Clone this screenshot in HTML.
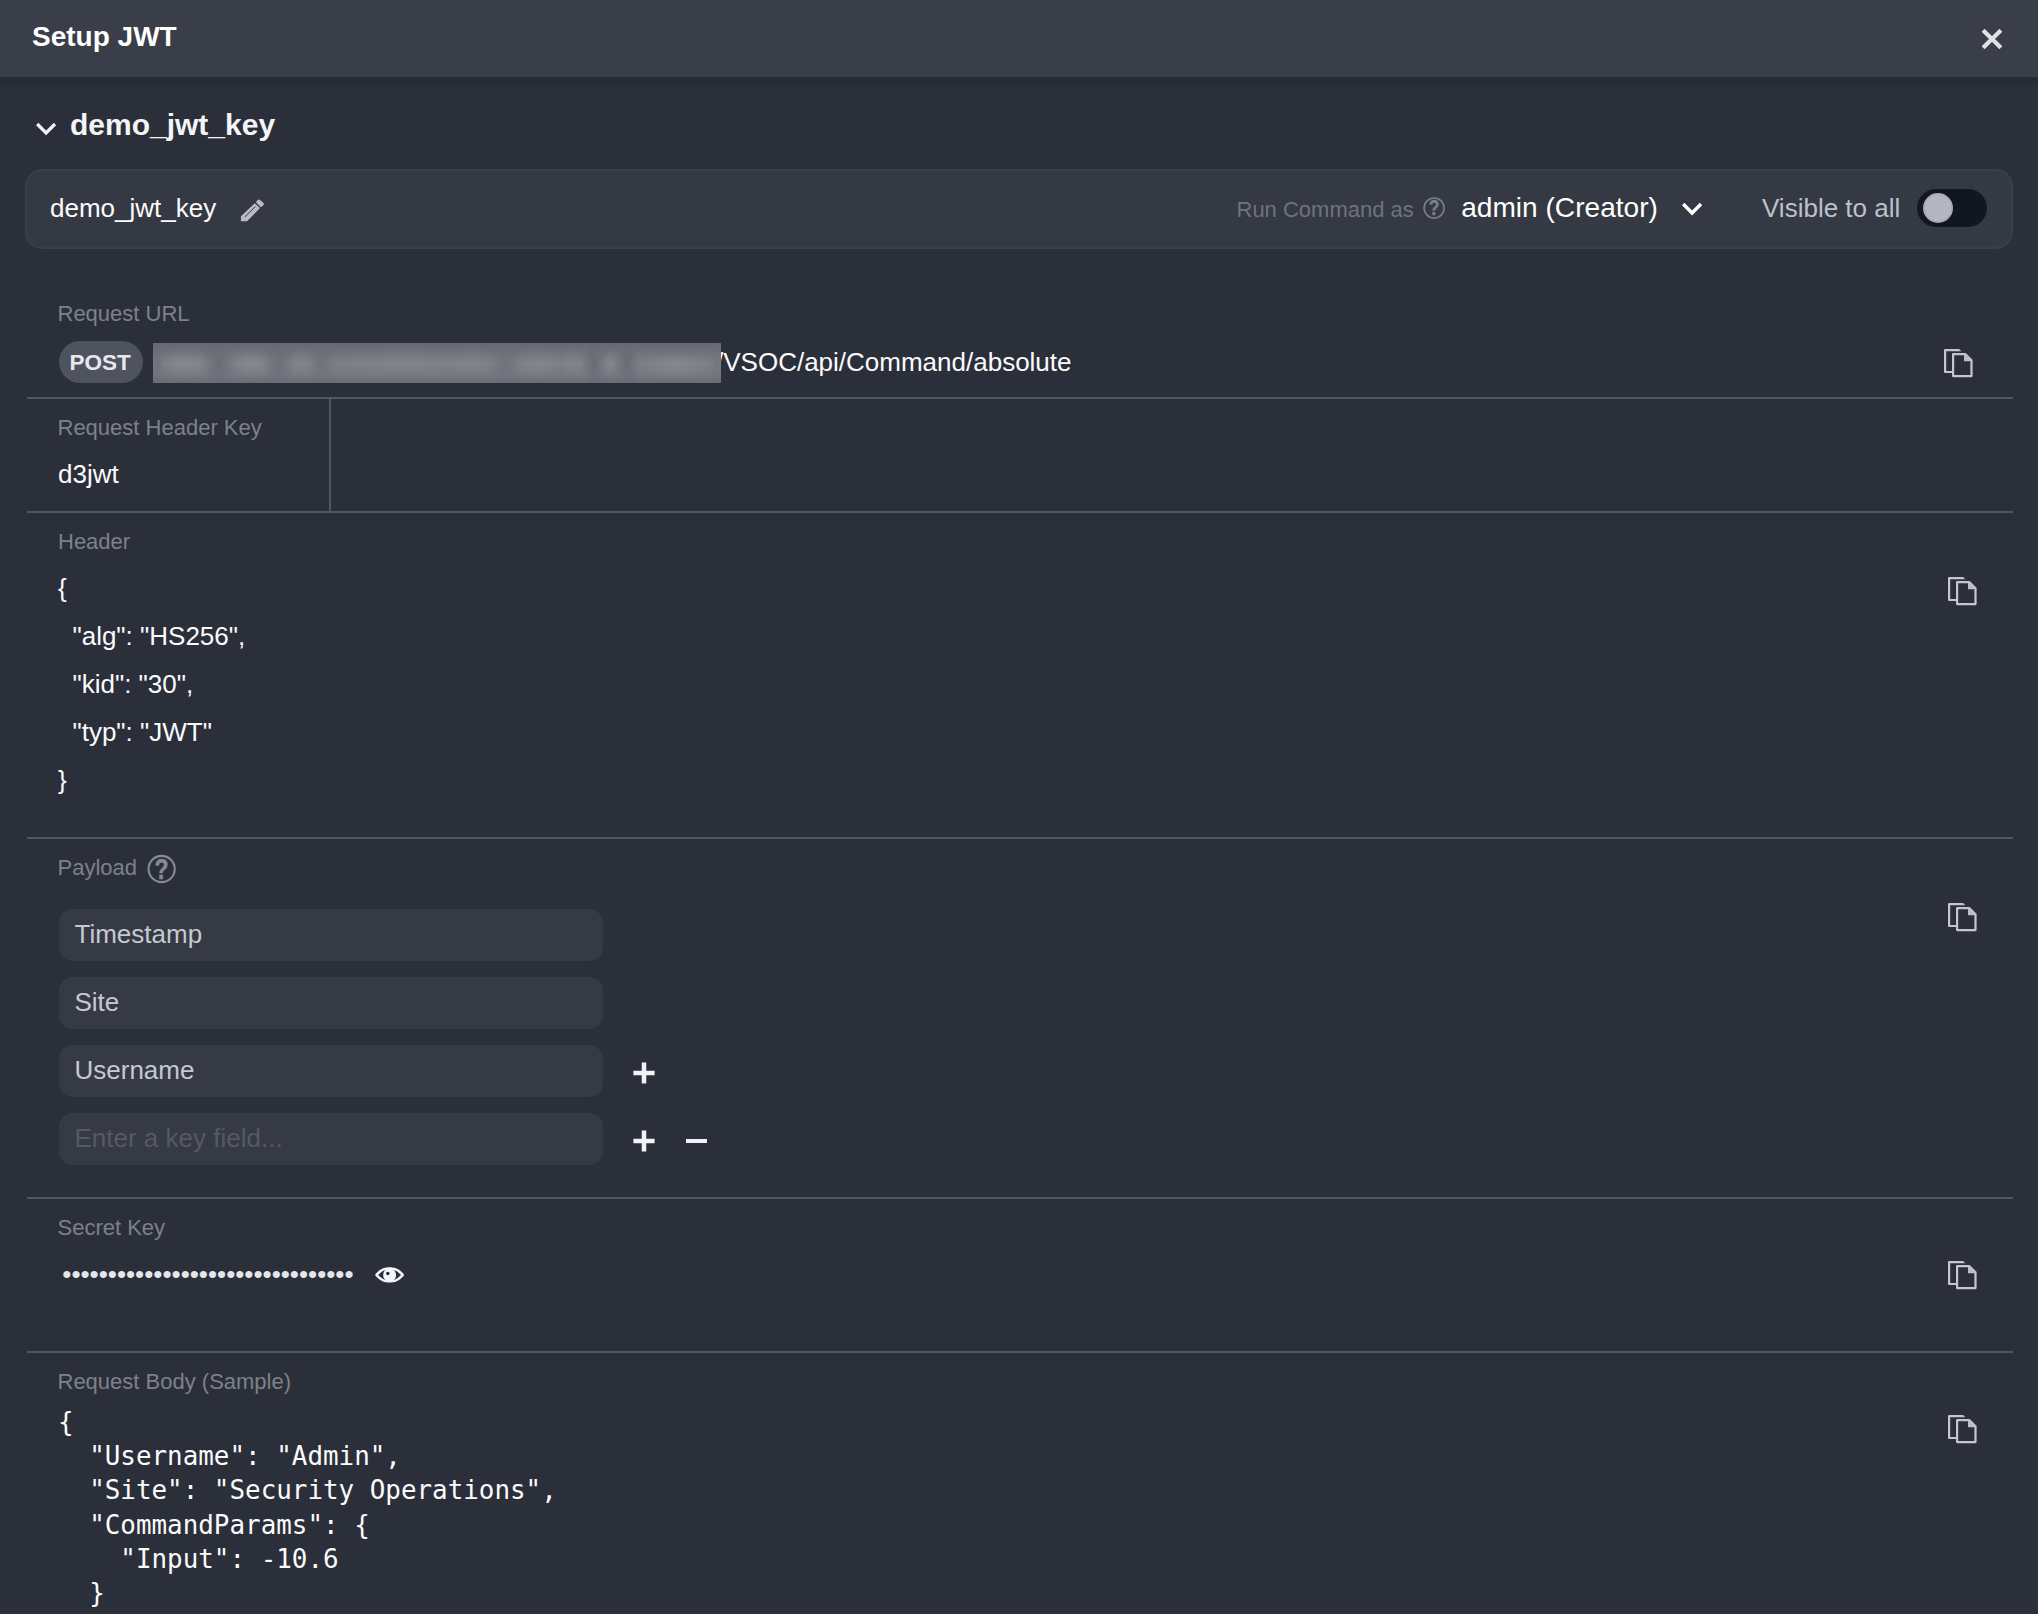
<!DOCTYPE html>
<html lang="en">
<head>
<meta charset="utf-8">
<title>Setup JWT</title>
<style>
*{box-sizing:border-box;margin:0;padding:0}
html,body{width:2038px;height:1614px;overflow:hidden;background:#2b2f3a}
body{position:relative;font-family:"Liberation Sans",Arial,sans-serif;color:#fff;-webkit-font-smoothing:antialiased}
.abs{position:absolute;white-space:pre}
.t{position:absolute;white-space:pre;line-height:1}
.lbl{font-size:22px;color:#7d818b}
.val{font-size:26px;color:#fbfbfc}
#hdr{position:absolute;left:0;top:0;width:2038px;height:85px;background:#272b34}
#hdr i{position:absolute;left:0;top:0;width:2038px;height:77px;background:#3a3e48;border-bottom:1px solid #3d414b}
#card{position:absolute;left:25px;top:169px;width:1988px;height:80px;border-radius:17px;background:#353943;border:2px solid #3a3e49}
.hr{position:absolute;left:27px;width:1986px;height:2px;background:#515662}
.inp{position:absolute;left:59px;width:544px;height:52px;border-radius:14px;background:#363a45}
.inp span{position:absolute;left:15.5px;top:12px;font-size:26px;line-height:1;color:#c6c9d0;white-space:pre}
.copy{position:absolute;width:30px;height:30px}
</style>
</head>
<body>

<!-- title bar -->
<div id="hdr"><i></i></div>
<div class="t" style="left:32px;top:23px;font-size:28px;font-weight:bold;color:#fff">Setup JWT</div>
<svg class="abs" style="left:1976px;top:23px" width="32" height="32" viewBox="0 0 32 32"><path d="M7.1 7.3 L24.9 24.7 M24.9 7.3 L7.1 24.7" stroke="#dfe1e6" stroke-width="4.2" fill="none"/></svg>

<!-- section heading -->
<svg class="abs" style="left:32px;top:118px" width="28" height="22" viewBox="0 0 28 22"><path d="M5.2 6 L14.1 15 L23 6" stroke="#f1f2f4" stroke-width="3.3" fill="none"/></svg>
<div class="t" style="left:70px;top:110px;font-size:30px;font-weight:bold;color:#f4f5f7">demo_jwt_key</div>

<!-- card -->
<div id="card"></div>
<div class="abs" style="left:1445px;top:183px;width:268px;height:51px;background:#2d313c"><div style="width:100%;height:100%;border-radius:4px;background:#353943"></div></div>
<div class="t val" style="left:50px;top:195px">demo_jwt_key</div>
<svg class="abs" style="left:238px;top:197px" width="28" height="26" viewBox="238 197 28 26"><path d="M240.9 221.2 L240.9 216.3 L254.75 203.25 L260.05 208.1 L247 221.2 Z" fill="#b9bcc4"/><path d="M255.95 202.3 L257.6 200.2 Q258.7 199.2 260 199.9 L263.5 203 Q264.4 204 263.5 205.1 L260.95 207.35 Z" fill="#b9bcc4"/><path d="M244.9 216.9 L255.4 206.5" stroke="#353943" stroke-width="1" fill="none"/></svg>
<svg class="abs" style="left:1422px;top:196px" width="24" height="24" viewBox="0 0 24 24"><circle cx="12.1" cy="12" r="10" fill="none" stroke="#7b7f8a" stroke-width="1.6"/><text transform="translate(12 19.4) scale(1 1.24)" x="0" y="0" text-anchor="middle" font-family="Liberation Sans, Arial, sans-serif" font-weight="bold" font-size="17.6" fill="#7b7f8a" stroke="#7b7f8a" stroke-width="0.3">?</text></svg>
<div class="t lbl" style="left:1236.5px;top:199px;color:#6f737d">Run Command as</div>
<div class="t" style="left:1461.2px;top:194px;font-size:28.1px;color:#fff">admin (Creator)</div>
<svg class="abs" style="left:1678px;top:198px" width="28" height="22" viewBox="0 0 28 22"><path d="M5.2 6 L14.1 15 L23 6" stroke="#fff" stroke-width="3.4" fill="none"/></svg>
<div class="t val" style="left:1762px;top:195px;color:#bdc1ca">Visible to all</div>
<div class="abs" style="left:1917px;top:189px;width:70px;height:38px;border-radius:19px;background:#121622"></div>
<div class="abs" style="left:1923px;top:193px;width:30px;height:30px;border-radius:15px;background:#b5b7c0;border:2px solid #a9abb4"></div>

<!-- Request URL -->
<div class="t lbl" style="left:57.5px;top:302.5px">Request URL</div>
<div class="abs" style="left:59px;top:341px;width:84px;height:42px;border-radius:21px;background:#4f5360"></div>
<div class="t" style="left:69.6px;top:352px;font-size:22.5px;font-weight:bold;color:#e6e8ec">POST</div>
<div class="t val" style="left:716px;top:348.5px">/VSOC/api/Command/absolute</div>
<div id="blur" class="abs" style="left:153px;top:343px;width:568px;height:40px;overflow:hidden;background:radial-gradient(ellipse 18px 24px at 66px 20px,rgba(98,101,110,0.7),rgba(98,101,110,0) 100%),radial-gradient(ellipse 16px 24px at 126px 20px,rgba(98,101,110,0.6),rgba(98,101,110,0) 100%),radial-gradient(ellipse 14px 24px at 169px 20px,rgba(98,101,110,0.5),rgba(98,101,110,0) 100%),radial-gradient(ellipse 16px 24px at 352px 20px,rgba(98,101,110,0.45),rgba(98,101,110,0) 100%),radial-gradient(ellipse 13px 24px at 441px 20px,rgba(98,101,110,0.75),rgba(98,101,110,0) 100%),radial-gradient(ellipse 13px 24px at 474px 20px,rgba(98,101,110,0.75),rgba(98,101,110,0) 100%),radial-gradient(ellipse 8px 24px at 4px 20px,rgba(98,101,110,0.5),rgba(98,101,110,0) 100%),radial-gradient(ellipse 8px 24px at 564px 20px,rgba(98,101,110,0.3),rgba(98,101,110,0) 100%),radial-gradient(ellipse 26px 15px at 33px 21px,rgba(142,144,151,0.5),rgba(142,144,151,0) 100%),radial-gradient(ellipse 22px 15px at 98px 21px,rgba(142,144,151,0.5),rgba(142,144,151,0) 100%),radial-gradient(ellipse 16px 15px at 147px 21px,rgba(142,144,151,0.3),rgba(142,144,151,0) 100%),radial-gradient(ellipse 60px 15px at 250px 21px,rgba(142,144,151,0.25),rgba(142,144,151,0) 100%),radial-gradient(ellipse 24px 15px at 318px 21px,rgba(142,144,151,0.3),rgba(142,144,151,0) 100%),radial-gradient(ellipse 24px 15px at 385px 21px,rgba(142,144,151,0.35),rgba(142,144,151,0) 100%),radial-gradient(ellipse 14px 15px at 421px 21px,rgba(142,144,151,0.3),rgba(142,144,151,0) 100%),radial-gradient(ellipse 8px 15px at 457px 21px,rgba(142,144,151,0.3),rgba(142,144,151,0) 100%),radial-gradient(ellipse 34px 15px at 524px 23px,rgba(142,144,151,0.45),rgba(142,144,151,0) 100%),linear-gradient(to bottom,#666972 0%,#6e7179 20%,#7d8087 50%,#767981 78%,#696c74 100%)"></div>
<div class="hr" style="top:397px"></div>

<!-- Request Header Key -->
<div class="t lbl" style="left:57.5px;top:417px">Request Header Key</div>
<div class="t val" style="left:58px;top:461px">d3jwt</div>
<div class="abs" style="left:329px;top:399px;width:2px;height:112px;background:#515662"></div>
<div class="hr" style="top:511px"></div>

<!-- Header -->
<div class="t lbl" style="left:58px;top:531px">Header</div>
<pre class="abs val" style="left:58px;top:564px;line-height:48px;font-family:inherit">{
  "alg": "HS256",
  "kid": "30",
  "typ": "JWT"
}</pre>
<div class="hr" style="top:837px"></div>

<!-- Payload -->
<div class="t lbl" style="left:57.5px;top:857px">Payload</div>
<svg class="abs" style="left:145px;top:853px" width="32" height="32" viewBox="0 0 32 32"><circle cx="16.65" cy="16" r="13.1" fill="none" stroke="#868a95" stroke-width="2.1"/><text transform="translate(16.5 26.1) scale(1 1.28)" x="0" y="0" text-anchor="middle" font-family="Liberation Sans, Arial, sans-serif" font-weight="bold" font-size="23" fill="#868a95" stroke="#868a95" stroke-width="0.4">?</text></svg>
<div class="inp" style="top:909px"><span>Timestamp</span></div>
<div class="inp" style="top:977px"><span>Site</span></div>
<div class="inp" style="top:1045px"><span>Username</span></div>
<div class="inp" style="top:1113px"><span style="color:#555964">Enter a key field...</span></div>
<svg class="abs" style="left:633.2px;top:1062.1px" width="22" height="22" viewBox="0 0 22 22"><path d="M0.4 11 H21.6 M11 0.6 V21.4" stroke="#f1f2f5" stroke-width="4.5" fill="none"/></svg>
<svg class="abs" style="left:633.2px;top:1130.1px" width="22" height="22" viewBox="0 0 22 22"><path d="M0.4 11 H21.6 M11 0.6 V21.4" stroke="#f1f2f5" stroke-width="4.5" fill="none"/></svg>
<div class="abs" style="left:685.5px;top:1138.8px;width:21px;height:4.5px;background:#f1f2f5"></div>
<div class="hr" style="top:1197px"></div>

<!-- Secret Key -->
<div class="t lbl" style="left:57.5px;top:1216.5px">Secret Key</div>
<div class="t val" style="left:62.3px;top:1260.5px;color:#e4e6ea">••••••••••••••••••••••••••••••••</div>
<svg class="abs" style="left:374px;top:1265px" width="32" height="20" viewBox="0 0 32 20"><path d="M1 9.9 C6 3.3 11 2.3 15.6 2.3 C20.2 2.3 25.2 3.3 30.2 9.9 C25.2 16.5 20.2 17.5 15.6 17.5 C11 17.5 6 16.5 1 9.9 Z" fill="#f6f6f8"/><path d="M4.2 9.9 C8.5 5.2 12 4.6 15.6 4.6 C19.2 4.6 22.7 5.2 27 9.9 C22.7 14.6 19.2 15.2 15.6 15.2 C12 15.2 8.5 14.6 4.2 9.9 Z" fill="#2b2f3a"/><ellipse cx="15.6" cy="9.9" rx="6.5" ry="6.6" fill="#f6f6f8"/><circle cx="13.8" cy="8.6" r="1.75" fill="#23263a"/></svg>
<div class="hr" style="top:1351px"></div>

<!-- Request Body -->
<div class="t lbl" style="left:57.5px;top:1371px">Request Body (Sample)</div>
<pre class="abs" style="left:58px;top:1405.3px;font-family:'DejaVu Sans Mono','Liberation Mono',monospace;font-size:25.9px;line-height:34.1px;color:#fbfbfc">{
  "Username": "Admin",
  "Site": "Security Operations",
  "CommandParams": {
    "Input": -10.6
  }
}</pre>

<!-- copy icons -->
<svg class="abs" style="left:1943.6px;top:348.9px" width="30" height="30" viewBox="0 0 30 30"><path d="M8 23 H1.1 V1.1 H15.3" fill="none" stroke="#c5c7cf" stroke-width="2.2" stroke-linejoin="round"/><path d="M15.2 0 L17.4 2.2 H15.2 Z" fill="#c5c7cf"/><path d="M9.1 5.2 H21.5 L27.5 11.2 V27.1 H9.1 Z" fill="none" stroke="#c5c7cf" stroke-width="2.2" stroke-linejoin="round"/><path d="M20 5.2 V12.3 H27.5 V11.2 L21.5 5.2 Z" fill="#bdbfc8"/></svg>
<svg class="abs" style="left:1947.8px;top:576.9px" width="30" height="30" viewBox="0 0 30 30"><path d="M8 23 H1.1 V1.1 H15.3" fill="none" stroke="#c5c7cf" stroke-width="2.2" stroke-linejoin="round"/><path d="M15.2 0 L17.4 2.2 H15.2 Z" fill="#c5c7cf"/><path d="M9.1 5.2 H21.5 L27.5 11.2 V27.1 H9.1 Z" fill="none" stroke="#c5c7cf" stroke-width="2.2" stroke-linejoin="round"/><path d="M20 5.2 V12.3 H27.5 V11.2 L21.5 5.2 Z" fill="#bdbfc8"/></svg>
<svg class="abs" style="left:1947.8px;top:902.8px" width="30" height="30" viewBox="0 0 30 30"><path d="M8 23 H1.1 V1.1 H15.3" fill="none" stroke="#c5c7cf" stroke-width="2.2" stroke-linejoin="round"/><path d="M15.2 0 L17.4 2.2 H15.2 Z" fill="#c5c7cf"/><path d="M9.1 5.2 H21.5 L27.5 11.2 V27.1 H9.1 Z" fill="none" stroke="#c5c7cf" stroke-width="2.2" stroke-linejoin="round"/><path d="M20 5.2 V12.3 H27.5 V11.2 L21.5 5.2 Z" fill="#bdbfc8"/></svg>
<svg class="abs" style="left:1947.8px;top:1260.8px" width="30" height="30" viewBox="0 0 30 30"><path d="M8 23 H1.1 V1.1 H15.3" fill="none" stroke="#c5c7cf" stroke-width="2.2" stroke-linejoin="round"/><path d="M15.2 0 L17.4 2.2 H15.2 Z" fill="#c5c7cf"/><path d="M9.1 5.2 H21.5 L27.5 11.2 V27.1 H9.1 Z" fill="none" stroke="#c5c7cf" stroke-width="2.2" stroke-linejoin="round"/><path d="M20 5.2 V12.3 H27.5 V11.2 L21.5 5.2 Z" fill="#bdbfc8"/></svg>
<svg class="abs" style="left:1947.8px;top:1414.8px" width="30" height="30" viewBox="0 0 30 30"><path d="M8 23 H1.1 V1.1 H15.3" fill="none" stroke="#c5c7cf" stroke-width="2.2" stroke-linejoin="round"/><path d="M15.2 0 L17.4 2.2 H15.2 Z" fill="#c5c7cf"/><path d="M9.1 5.2 H21.5 L27.5 11.2 V27.1 H9.1 Z" fill="none" stroke="#c5c7cf" stroke-width="2.2" stroke-linejoin="round"/><path d="M20 5.2 V12.3 H27.5 V11.2 L21.5 5.2 Z" fill="#bdbfc8"/></svg>

</body>
</html>
